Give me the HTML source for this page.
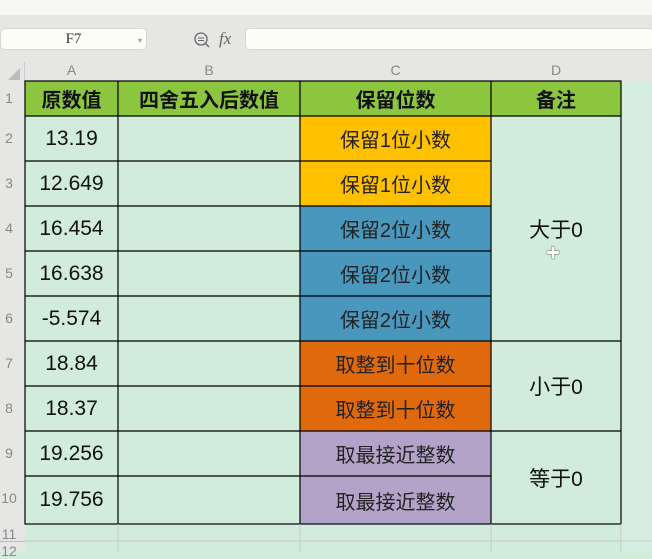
<!DOCTYPE html><html><head><meta charset="utf-8"><style>
body{margin:0;width:652px;height:552px;overflow:hidden;background:#d2ecdc;font-family:"Liberation Sans","Noto Sans CJK SC",sans-serif;position:relative}
div{position:absolute;box-sizing:border-box}
.hd{color:#888;font-size:14px;text-align:center}
.c{display:flex;align-items:center;justify-content:center;color:#111}
.n{font-size:21px}
.t{font-size:20px;color:#222}
</style></head><body>
<div style="left:0;top:0;width:652px;height:15px;background:#f7f7f3"></div>
<div style="left:0;top:15px;width:652px;height:66px;background:#e6e6e4"></div>
<div style="left:0;top:28px;width:147px;height:22px;background:#fdfdf8;border:1px solid #d8d8d8;border-radius:5px;font-family:'Liberation Serif',serif;font-size:15px;text-align:center;line-height:20px;color:#333">F7</div>
<div style="left:138px;top:36px;color:#999;font-size:8px">▾</div>
<svg style="position:absolute;left:193px;top:31px" width="18" height="18"><circle cx="8" cy="8" r="6" fill="none" stroke="#666" stroke-width="1.3"/><line x1="5" y1="7" x2="11" y2="7" stroke="#666"/><line x1="5" y1="9.5" x2="11" y2="9.5" stroke="#666"/><line x1="12" y1="12" x2="16" y2="16" stroke="#666" stroke-width="1.5"/></svg>
<div style="left:219px;top:29px;font-family:'Liberation Serif',serif;font-style:italic;font-size:17px;color:#666">fx</div>
<div style="left:245px;top:28px;width:410px;height:22px;background:#fdfdf8;border:1px solid #d8d8d8;border-radius:5px"></div>
<div style="left:8px;top:68px;width:0;height:0;border-left:12px solid transparent;border-bottom:12px solid #bbb"></div>
<div class="hd" style="left:25px;top:62px;width:93px">A</div>
<div class="hd" style="left:118px;top:62px;width:182px">B</div>
<div class="hd" style="left:300px;top:62px;width:191px">C</div>
<div class="hd" style="left:491px;top:62px;width:130px">D</div>
<div style="left:24px;top:62px;width:1px;height:490px;background:#ccc"></div>
<div style="left:0;top:81px;width:25px;height:471px;background:#e6e6e4"></div>
<div style="left:25px;top:81px;width:596px;height:35px;background:#8cc63f"></div>
<div class="c" style="left:25px;top:81px;width:93px;height:35px;font-size:20px;font-weight:bold">原数值</div>
<div class="c" style="left:118px;top:81px;width:182px;height:35px;font-size:20px;font-weight:bold">四舍五入后数值</div>
<div class="c" style="left:300px;top:81px;width:191px;height:35px;font-size:20px;font-weight:bold">保留位数</div>
<div class="c" style="left:491px;top:81px;width:130px;height:35px;font-size:20px;font-weight:bold">备注</div>
<div class="hd" style="left:0;top:90px;width:18px">1</div>
<div class="hd" style="left:0;top:130px;width:18px">2</div>
<div class="hd" style="left:0;top:175px;width:18px">3</div>
<div class="hd" style="left:0;top:220px;width:18px">4</div>
<div class="hd" style="left:0;top:265px;width:18px">5</div>
<div class="hd" style="left:0;top:310px;width:18px">6</div>
<div class="hd" style="left:0;top:355px;width:18px">7</div>
<div class="hd" style="left:0;top:400px;width:18px">8</div>
<div class="hd" style="left:0;top:445px;width:18px">9</div>
<div class="hd" style="left:0;top:490px;width:18px">10</div>
<div class="hd" style="left:0;top:526px;width:18px">11</div>
<div class="hd" style="left:0;top:543px;width:18px">12</div>
<div style="left:0;top:541px;width:25px;height:1px;background:#bbb"></div>
<div style="left:621px;top:81px;width:31px;height:471px;background:#d6eee2"></div>
<div style="left:300px;top:116px;width:191px;height:90px;background:#ffc000"></div>
<div style="left:300px;top:206px;width:191px;height:135px;background:#4a97be"></div>
<div style="left:300px;top:341px;width:191px;height:90px;background:#e0690c"></div>
<div style="left:300px;top:431px;width:191px;height:93px;background:#b3a3c8"></div>
<div class="c n" style="left:25px;top:116px;width:93px;height:45px">13.19</div>
<div class="c n" style="left:25px;top:161px;width:93px;height:45px">12.649</div>
<div class="c n" style="left:25px;top:206px;width:93px;height:45px">16.454</div>
<div class="c n" style="left:25px;top:251px;width:93px;height:45px">16.638</div>
<div class="c n" style="left:25px;top:296px;width:93px;height:45px">-5.574</div>
<div class="c n" style="left:25px;top:341px;width:93px;height:45px">18.84</div>
<div class="c n" style="left:25px;top:386px;width:93px;height:45px">18.37</div>
<div class="c n" style="left:25px;top:431px;width:93px;height:45px">19.256</div>
<div class="c n" style="left:25px;top:476px;width:93px;height:48px">19.756</div>
<div class="c t" style="left:300px;top:116px;width:191px;height:45px">保留1位小数</div>
<div class="c t" style="left:300px;top:161px;width:191px;height:45px">保留1位小数</div>
<div class="c t" style="left:300px;top:206px;width:191px;height:45px">保留2位小数</div>
<div class="c t" style="left:300px;top:251px;width:191px;height:45px">保留2位小数</div>
<div class="c t" style="left:300px;top:296px;width:191px;height:45px">保留2位小数</div>
<div class="c t" style="left:300px;top:341px;width:191px;height:45px">取整到十位数</div>
<div class="c t" style="left:300px;top:386px;width:191px;height:45px">取整到十位数</div>
<div class="c t" style="left:300px;top:431px;width:191px;height:45px">取最接近整数</div>
<div class="c t" style="left:300px;top:476px;width:191px;height:48px">取最接近整数</div>
<div class="c" style="left:491px;top:206px;width:130px;height:45px;font-size:21px">大于0</div>
<div class="c" style="left:491px;top:363px;width:130px;height:45px;font-size:21px">小于0</div>
<div class="c" style="left:491px;top:455px;width:130px;height:45px;font-size:21px">等于0</div>
<div style="left:546px;top:243px;color:#fff;font-size:14px;font-weight:bold;text-shadow:0 0 1px #000,0 0 1px #000">✚</div>
<svg style="position:absolute;left:0;top:0" width="652" height="552">
<g stroke="#000" stroke-width="1.2" fill="none">
<rect x="25" y="81" width="596" height="443"/>
<line x1="25" y1="116" x2="621" y2="116"/>
<line x1="118" y1="81" x2="118" y2="524"/>
<line x1="300" y1="81" x2="300" y2="524"/>
<line x1="491" y1="81" x2="491" y2="524"/>
<g>
<line x1="25" y1="161" x2="491" y2="161"/>
<line x1="25" y1="206" x2="491" y2="206"/>
<line x1="25" y1="251" x2="491" y2="251"/>
<line x1="25" y1="296" x2="491" y2="296"/>
<line x1="25" y1="341" x2="621" y2="341"/>
<line x1="25" y1="386" x2="491" y2="386"/>
<line x1="25" y1="431" x2="621" y2="431"/>
<line x1="25" y1="476" x2="491" y2="476"/>
</g></g>
<g stroke="#c8c8c8" stroke-width="1"><line x1="118" y1="524" x2="118" y2="552"/><line x1="300" y1="524" x2="300" y2="552"/><line x1="491" y1="524" x2="491" y2="552"/><line x1="621" y1="524" x2="621" y2="552"/><line x1="25" y1="541" x2="652" y2="541"/></g>
</svg>
</body></html>
